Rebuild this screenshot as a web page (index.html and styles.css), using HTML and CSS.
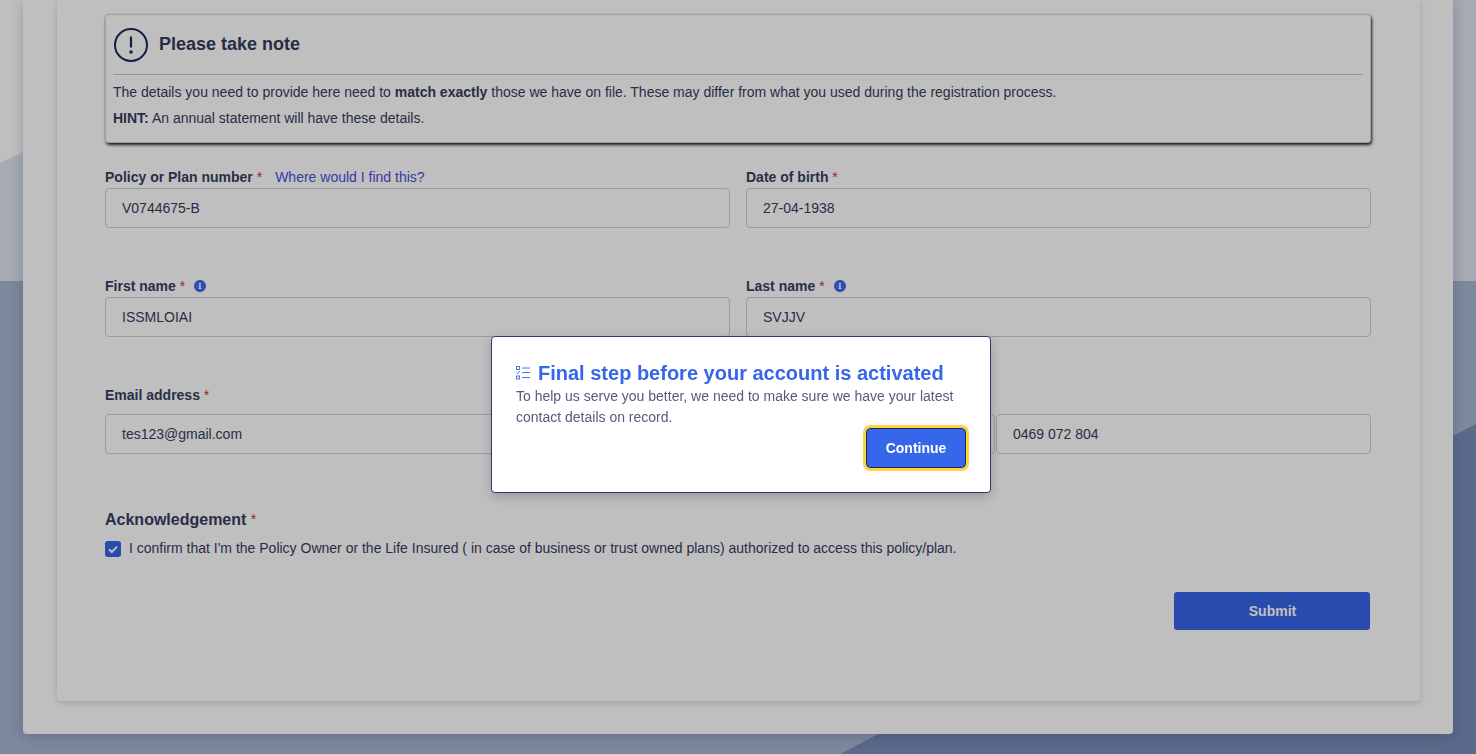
FILE: index.html
```html
<!DOCTYPE html>
<html lang="en">
<head>
<meta charset="utf-8">
<title>Final step before your account is activated</title>
<link rel="stylesheet" href="styles.css">
</head>
<body>
<svg class="backdrop" width="1476" height="754" viewBox="0 0 1476 754" aria-hidden="true">
  <rect width="1476" height="754" fill="#ffffff"/>
  <polygon points="0,163 347,0 1476,0 1476,281 0,281" fill="#dde3f1"/>
  <rect y="281" width="1476" height="473" fill="#a8b6d2"/>
  <polygon points="1476,424 1476,754 840,754" fill="#7b8db9"/>
</svg>
<main class="shell">
  <section class="panel">
    <form class="form">
      <div class="notice">
        <div class="notice-head">
          <svg class="notice-icon" width="34" height="34" viewBox="0 0 34 34" aria-hidden="true">
            <circle cx="17" cy="17" r="16" fill="none" stroke="#1b2a5c" stroke-width="2"/>
            <path d="M17 8.500V19.500" stroke="#1b2a5c" stroke-width="2.200" fill="none"/>
            <circle cx="17" cy="24" r="1.800" fill="#1b2a5c"/>
          </svg>
          <h2 class="notice-title">Please take note</h2>
        </div>
        <p class="notice-text">The details you need to provide here need to <b>match exactly</b> those we have on file. These may differ from what you used during the registration process.</p>
        <p class="notice-text"><b>HINT:</b> An annual statement will have these details.</p>
      </div>

      <div class="grid">
        <div class="field">
          <div class="label-row"><label class="label">Policy or Plan number <span class="req">*</span></label><a class="help" href="#">Where would I find this?</a></div>
          <div class="input">V0744675-B</div>
        </div>
        <div class="field">
          <div class="label-row"><label class="label">Date of birth <span class="req">*</span></label></div>
          <div class="input">27-04-1938</div>
        </div>
        <div class="field">
          <div class="label-row"><label class="label">First name <span class="req">*</span></label>
            <svg class="info" width="12" height="12" viewBox="8 8 496 496" aria-hidden="true"><path fill="#3e68f0" d="M256 8C119.043 8 8 119.083 8 256c0 136.997 111.043 248 248 248s248-111.003 248-248C504 119.083 392.957 8 256 8zm0 110c23.196 0 42 18.804 42 42s-18.804 42-42 42-42-18.804-42-42 18.804-42 42-42zm56 254c0 6.627-5.373 12-12 12h-88c-6.627 0-12-5.373-12-12v-24c0-6.627 5.373-12 12-12h12v-64h-12c-6.627 0-12-5.373-12-12v-24c0-6.627 5.373-12 12-12h64c6.627 0 12 5.373 12 12v100h12c6.627 0 12 5.373 12 12v24z"/></svg>
          </div>
          <div class="input">ISSMLOIAI</div>
        </div>
        <div class="field">
          <div class="label-row"><label class="label">Last name <span class="req">*</span></label>
            <svg class="info" width="12" height="12" viewBox="8 8 496 496" aria-hidden="true"><path fill="#3e68f0" d="M256 8C119.043 8 8 119.083 8 256c0 136.997 111.043 248 248 248s248-111.003 248-248C504 119.083 392.957 8 256 8zm0 110c23.196 0 42 18.804 42 42s-18.804 42-42 42-42-18.804-42-42 18.804-42 42-42zm56 254c0 6.627-5.373 12-12 12h-88c-6.627 0-12-5.373-12-12v-24c0-6.627 5.373-12 12-12h12v-64h-12c-6.627 0-12-5.373-12-12v-24c0-6.627 5.373-12 12-12h64c6.627 0 12 5.373 12 12v100h12c6.627 0 12 5.373 12 12v24z"/></svg>
          </div>
          <div class="input">SVJJV</div>
        </div>
        <div class="field">
          <div class="label-row label-row-tall"><label class="label">Email address <span class="req">*</span></label></div>
          <div class="input">tes123@gmail.com</div>
        </div>
        <div class="field">
          <div class="label-row label-row-tall"></div>
          <div class="phone">
            <div class="input code"></div>
            <div class="input">0469 072 804</div>
          </div>
        </div>
      </div>

      <h3 class="ack-title">Acknowledgement <span class="req req-small">*</span></h3>
      <div class="ack">
        <span class="check">
          <svg width="16" height="16" viewBox="0 0 16 16" aria-hidden="true"><path d="M4 8.300 6.800 11 12 5.600" fill="none" stroke="#ffffff" stroke-width="2"/></svg>
        </span>
        <span class="ack-text">I confirm that I'm the Policy Owner or the Life Insured ( in case of business or trust owned plans) authorized to access this policy/plan.</span>
      </div>

      <div class="actions"><button class="submit" type="button">Submit</button></div>
    </form>
  </section>
</main>

<div class="overlay">
  <div class="modal" role="dialog">
    <h2 class="modal-title">
      <svg class="list-icon" width="14" height="14" viewBox="0 0 14 14" aria-hidden="true">
        <g fill="none" stroke="#3667ea" stroke-width="0.900">
          <rect x="0.500" y="0.500" width="3" height="3"/>
          <path d="M0.500 6.500 1.700 7.700 3.700 5.300"/>
          <rect x="0.500" y="10" width="3" height="3"/>
          <path d="M6 2H14M6 6.500H14M6 11.500H14"/>
        </g>
      </svg>
      <span>Final step before your account is activated</span>
    </h2>
    <p class="modal-text">To help us serve you better, we need to make sure we have your latest contact details on record.</p>
    <div class="modal-actions"><button class="continue" type="button">Continue</button></div>
  </div>
</div>
</body>
</html>
```

FILE: styles.css
```css
* { box-sizing: border-box; }
html, body { margin: 0; padding: 0; height: 754px; overflow: hidden; }
body {
  font-family: "Liberation Sans", Arial, sans-serif;
  font-size: 14px;
  color: #363d5c;
  position: relative;
}
.backdrop { position: absolute; top: 0; left: 0; display: block; }
.shell { position: relative; padding: 0 23px; }
.panel {
  width: 1430px;
  height: 734px;
  background: #ffffff;
  border-radius: 0 0 4px 4px;
  box-shadow: 0 2px 14px rgba(20, 30, 60, .22);
  padding: 0 33px 0 34px;
}
.form {
  height: 701px;
  background: #ffffff;
  border-radius: 0 0 4px 4px;
  box-shadow: 0 2px 6px rgba(0, 0, 0, .16);
  padding: 14px 49px 0 48px;
}
.notice {
  height: 129px;
  border: 1px solid #d6d6d6;
  border-radius: 4px;
  box-shadow: 1px 2px 3px rgba(0, 0, 0, .85), 0 0 1px rgba(0, 0, 0, .3);
  padding: 0 7px;
}
.notice-head {
  height: 60px;
  display: flex;
  align-items: center;
  gap: 11px;
  border-bottom: 1px solid #c6c6c6;
  margin-bottom: 7px;
}
.notice-icon { flex: none; margin-left: 1px; }
.notice-title { margin: 0; font-size: 18px; font-weight: 700; color: #333b5e; }
.notice-text { margin: 0 0 5px; line-height: 21px; font-size: 14px; }
.notice-text b { font-weight: 700; }
.grid {
  display: grid;
  grid-template-columns: 625px 625px;
  column-gap: 16px;
  row-gap: 48px;
  margin-top: 24px;
}
.label-row {
  height: 21px;
  display: flex;
  align-items: center;
  padding-bottom: 1px;
}
.label-row-tall { height: 29px; padding-bottom: 9px; }
.label { font-weight: 700; font-size: 14px; color: #363e62; }
.req { color: #c0392b; font-weight: 400; }
.req-small { font-size: 14px; vertical-align: 1px; }
.help { color: #4a50e0; text-decoration: none; margin-left: 13px; }
.info { margin-left: 9px; }
.input {
  height: 40px;
  line-height: 38px;
  border: 1px solid #cfcfd8;
  border-radius: 4px;
  padding: 0 16px;
  font-size: 14px;
}
.phone { display: grid; grid-template-columns: 249px 375px; column-gap: 1px; }
.ack-title {
  margin: 55px 0 0;
  height: 20px;
  line-height: 20px;
  font-size: 16px;
  font-weight: 700;
  color: #363e62;
}
.ack { display: flex; align-items: flex-start; gap: 8px; margin-top: 12px; }
.check {
  width: 16px;
  height: 16px;
  flex: none;
  border-radius: 3px;
  background: #3864e8;
  display: block;
}
.check svg { display: block; }
.ack-text { font-size: 14px; line-height: 16px; margin-top: -1px; }
.actions { display: flex; justify-content: flex-end; margin-top: 35px; padding-right: 1px; }
.submit {
  width: 196px;
  height: 38px;
  border: 0;
  border-radius: 3px;
  padding: 0 0 0 1px;
  background: #3864e8;
  color: #ffffff;
  font: 700 14px "Liberation Sans", Arial, sans-serif;
}
.overlay {
  position: fixed;
  top: 0;
  left: 0;
  width: 1476px;
  height: 754px;
  background: rgba(0, 0, 0, .25);
}
.modal {
  position: absolute;
  left: 491px;
  top: 336px;
  width: 500px;
  height: 157px;
  background: #ffffff;
  border: 1px solid #2f3a68;
  border-radius: 4px;
  box-shadow: 0 4px 12px rgba(0, 0, 0, .2);
  padding: 23px 24px 24px;
}
.modal-title {
  margin: 0;
  height: 26px;
  display: flex;
  align-items: center;
  gap: 8px;
  font-size: 20px;
  font-weight: 700;
  color: #3667ea;
  white-space: nowrap;
}
.list-icon { flex: none; }
.modal-text { margin: 0; font-size: 14px; line-height: 21px; color: #555b78; }
.modal-actions { display: flex; justify-content: flex-end; }
.continue {
  width: 100px;
  height: 40px;
  border: 1px solid #1d2a5a;
  border-radius: 4px;
  outline: 3px solid #ffd23f;
  outline-offset: 0;
  background: #3667ea;
  color: #ffffff;
  font: 700 14px "Liberation Sans", Arial, sans-serif;
}
```
